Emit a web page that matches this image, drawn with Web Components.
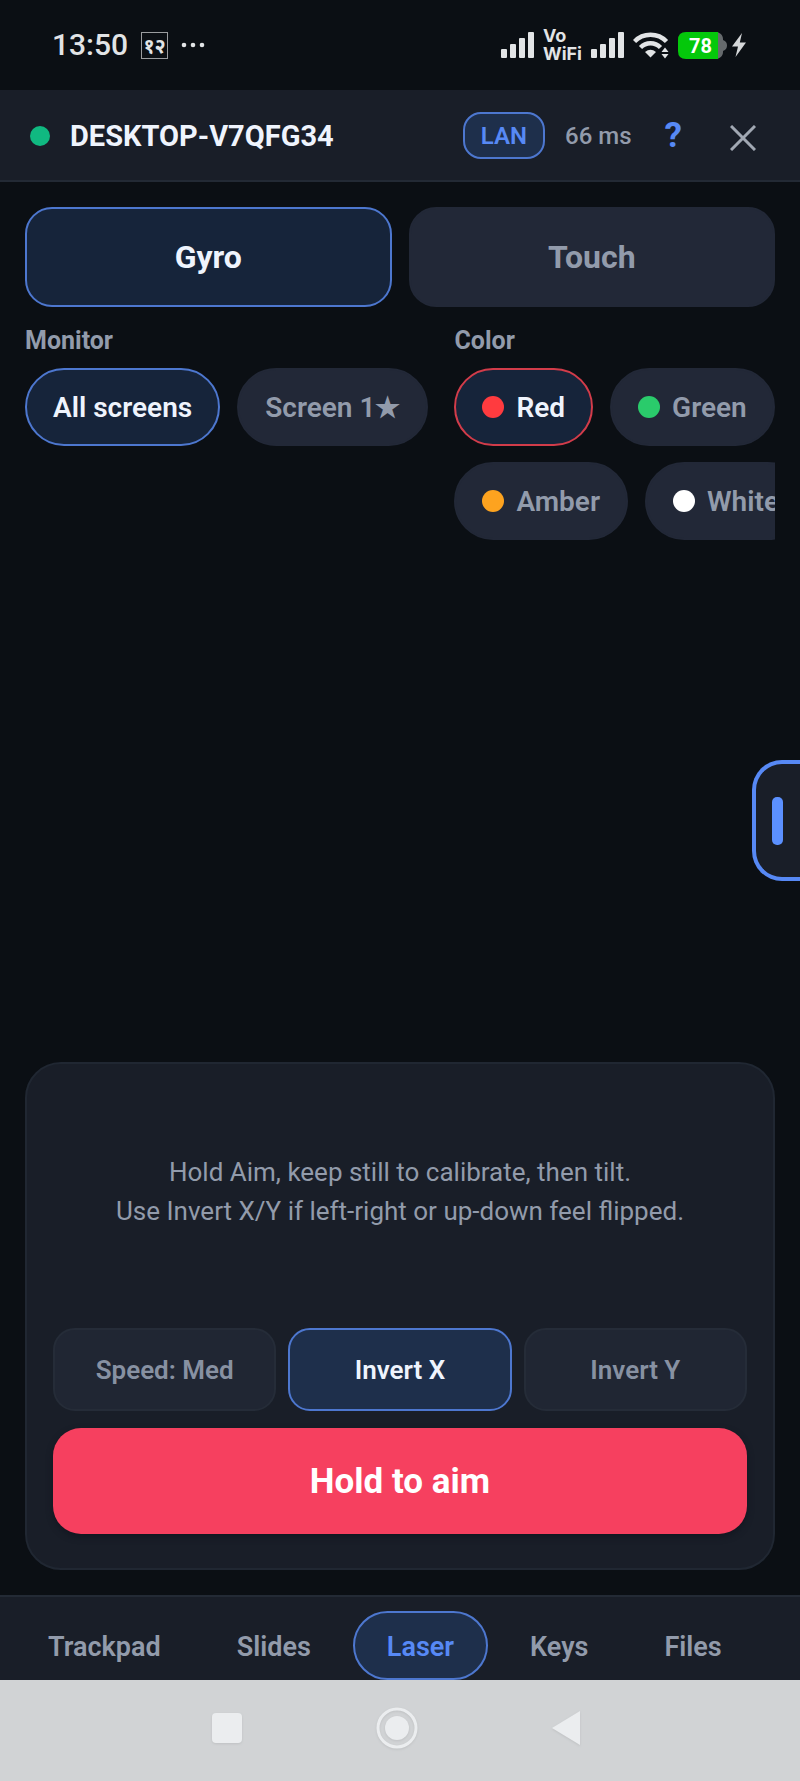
<!DOCTYPE html>
<html lang="en">
<head>
<meta charset="utf-8">
<meta name="viewport" content="width=device-width, initial-scale=1">
<title>Laser remote</title>
<style>
:root {
  --bg: #0b0f14;
  --surface: #191e28;
  --raised: #222837;
  --line: #232a35;
  --muted: #929bab;
  --text: #eff4fd;
  --accent: #5789f5;
  --accent-line: #4d77cf;
  --accent-fill: #16243a;
  --accent-soft: #1e2f4b;
}
body { margin: 0; background: var(--bg); color: var(--text); font-family: Roboto, "Noto Sans", sans-serif; }
</style>
</head>
<body>
<remote-app></remote-app>
<script>
const define = (name, html) => {
  const template = document.createElement('template');
  template.innerHTML = html;
  customElements.define(name, class extends HTMLElement {
    constructor() {
      super();
      this.attachShadow({ mode: 'open' }).append(template.content.cloneNode(true));
    }
  });
};

const buttonReset = 'button { font: inherit; color: inherit; margin: 0; padding: 0; border: 0; background: none; cursor: pointer; }';

define('signal-bars', `
<style>:host { display: block; } svg { display: block; }</style>
<svg width="33" height="26" viewBox="0 0 33 26" fill="#e2e4e6" aria-hidden="true">
  <rect y="17" width="6" height="9" rx="1"/><rect x="9" y="12" width="6" height="14" rx="1"/>
  <rect x="18" y="6" width="6" height="20" rx="1"/><rect x="27" width="6" height="26" rx="1"/>
</svg>`);

define('status-bar', `
<style>
:host { display: flex; align-items: center; justify-content: space-between; height: 90px; padding: 0 54px 0 52px; box-sizing: border-box; color: #e2e4e6; }
div { display: flex; align-items: center; }
svg { display: block; }
.left { gap: 13px; }
time { font-size: 30px; line-height: 36px; font-weight: 500; }
.app { box-sizing: border-box; width: 27px; height: 27px; border: 1px solid #9a9c9f; font-size: 20px; line-height: 26px; font-weight: 700; text-align: center; display: block; }
.right { gap: 9px; }
.vowifi { display: block; font-family: Inter, sans-serif; font-size: 18px; line-height: 18px; font-weight: 700; }
.vowifi span { display: block; }
.power { gap: 5px; }
.battery { position: relative; }
.battery span { position: absolute; left: 0; top: 0; width: 45px; line-height: 28px; text-align: center; color: #fff; font-size: 20px; font-weight: 700; }
</style>
<div class="left">
  <time>13:50</time>
  <span class="app">१२</span>
  <svg width="24" height="6" viewBox="0 0 24 6" fill="#e2e4e6" aria-hidden="true"><circle cx="3" cy="3" r="2.3"/><circle cx="12" cy="3" r="2.3"/><circle cx="21" cy="3" r="2.3"/></svg>
</div>
<div class="right">
  <signal-bars></signal-bars>
  <div class="vowifi"><span>Vo</span><span>WiFi</span></div>
  <signal-bars></signal-bars>
  <svg width="36" height="27" viewBox="0 0 36 27" fill="none" stroke="#e2e4e6" stroke-width="4.4" aria-hidden="true">
    <path d="M1.500 9.500C10 .5 25 .5 33.500 9.500"/><path d="M7.500 15.500C13 9.800 22 9.800 27.500 15.500"/>
    <path d="M12 20Q17.500 15.500 23 20L17.500 25.500Z" fill="#e2e4e6" stroke="none"/>
    <path d="M28.500 20L32 15.500L35.500 20ZM28.500 22L32 26.500L35.500 22Z" fill="#e2e4e6" stroke="none"/>
  </svg>
  <div class="power">
    <div class="battery">
      <svg width="49" height="27" viewBox="0 0 49 27" aria-hidden="true">
        <path d="M36 0h1c5 0 8 3 8 7v1c3 1 4 3 4 5.500s-1 4.500-4 5.500v1c0 4-3 7-8 7h-1z" fill="#666a6d"/>
        <path d="M8 0H40V27H8Q0 27 0 19V8Q0 0 8 0Z" fill="#04c80b"/>
      </svg>
      <span>78</span>
    </div>
    <svg width="14" height="24" viewBox="0 0 14 24" aria-hidden="true"><path d="M10 0L0 13.500H6L3.500 24L14 9.500H7.800Z" fill="#d5d7d9"/></svg>
  </div>
</div>`);

define('connection-header', `
<style>
${buttonReset}
:host { display: flex; align-items: center; height: 92px; padding: 1px 30px 0; box-sizing: border-box; background: var(--surface); border-bottom: 2px solid var(--line); }
.dot { width: 20px; height: 20px; border-radius: 50%; background: #10b981; }
h1 { flex: 1; margin: 0 0 0 20px; font-size: 29px; line-height: 36px; font-weight: 700; }
.badge { box-sizing: border-box; height: 47px; padding: 0 16px; border: 2px solid var(--accent-line); border-radius: 18px; background: var(--accent-soft); color: var(--accent); font-size: 24px; line-height: 44px; font-weight: 600; }
.ping { margin: 0 33px 0 20px; color: var(--muted); font-size: 24px; line-height: 30px; font-weight: 500; }
.help { color: var(--accent); font-size: 35px; line-height: 40px; font-weight: 700; }
.close { margin-left: 48px; padding: 4px 14px 0 0; }
svg { display: block; }
</style>
<span class="dot"></span>
<h1>DESKTOP-V7QFG34</h1>
<span class="badge">LAN</span>
<span class="ping">66 ms</span>
<button class="help" aria-label="Help">?</button>
<button class="close" aria-label="Close"><svg width="26" height="26" viewBox="0 0 26 26" fill="none" stroke="#a1a8b3" stroke-width="3"><path d="M1 1L25 25M25 1L1 25"/></svg></button>`);

define('mode-button', `
<style>
${buttonReset}
:host { display: block; flex: 1; }
button { box-sizing: border-box; width: 100%; height: 100px; border: 2px solid var(--raised); border-radius: 27px; background: var(--raised); color: var(--muted); font-size: 32px; font-weight: 700; }
:host([active]) button { border-color: var(--accent-line); background: var(--accent-fill); color: var(--text); }
</style>
<button><slot></slot></button>`);

define('choice-chip', `
<style>
${buttonReset}
:host { display: block; flex: none; }
button { box-sizing: border-box; display: flex; align-items: center; gap: 12px; height: 78px; padding: 0 26px; border: 2px solid var(--raised); border-radius: 39px; background: var(--raised); color: var(--muted); font-size: 28px; font-weight: 600; white-space: nowrap; }
:host([active]) button { border-color: var(--ring, var(--accent-line)); background: var(--accent-fill); color: var(--text); }
</style>
<button><slot name="dot"></slot><span><slot></slot></span></button>`);

define('color-dot', `
<style>:host { display: block; width: 22px; height: 22px; border-radius: 50%; background: var(--dot); }</style>`);

define('option-group', `
<style>
:host { display: block; min-width: 0; }
h2 { margin: 0 0 12px; color: var(--muted); font-size: 25px; line-height: 30px; font-weight: 700; }
.rows { display: grid; gap: 16px; overflow: hidden; }
</style>
<h2><slot name="label"></slot></h2>
<div class="rows"><slot></slot></div>`);

define('chip-row', `<style>:host { display: flex; gap: 17px; min-width: 0; }</style><slot></slot>`);

define('toggle-button', `
<style>
${buttonReset}
:host { display: block; flex: 1; }
button { box-sizing: border-box; width: 100%; height: 83px; border: 2px solid #252c38; border-radius: 22px; background: #202633; color: #8791a2; font-size: 26px; font-weight: 600; }
:host([active]) button { border-color: var(--accent-line); background: var(--accent-soft); color: var(--text); }
</style>
<button><slot></slot></button>`);

define('aim-panel', `
<style>
${buttonReset}
:host { display: block; padding: 89px 26px 34px; border: 2px solid #202732; border-radius: 36px; background: var(--surface); }
p { margin: 0 0 97px; color: var(--muted); text-align: center; font-size: 26px; line-height: 39px; }
.toggles { display: flex; gap: 12px; margin-bottom: 17px; }
.aim { display: block; width: 100%; height: 106px; border-radius: 28px; background: #f6405f; color: #fff; font-size: 35px; font-weight: 700; box-shadow: 0 3px 6px #131720; }
</style>
<p>Hold Aim, keep still to calibrate, then tilt.<br>Use Invert X/Y if left-right or up-down feel flipped.</p>
<div class="toggles">
  <toggle-button>Speed: Med</toggle-button>
  <toggle-button active>Invert X</toggle-button>
  <toggle-button>Invert Y</toggle-button>
</div>
<button class="aim">Hold to aim</button>`);

define('drawer-handle', `
<style>
${buttonReset}
:host { display: block; }
button { box-sizing: border-box; display: block; width: 48px; height: 121px; padding-left: 16px; border: 4px solid var(--accent); border-right: 0; border-radius: 30px 0 0 30px; background: var(--surface); }
span { display: block; width: 11px; height: 48px; border-radius: 5px; background: #5b90ff; }
</style>
<button aria-label="Open drawer"><span></span></button>`);

define('nav-tab', `
<style>
:host { display: block; }
a { box-sizing: border-box; display: block; height: 69px; padding: 0 32px; border: 2px solid transparent; border-radius: 35px; color: var(--muted); font-size: 27px; line-height: 68px; font-weight: 600; text-decoration: none; }
:host([active]) a { border-color: var(--accent-line); background: var(--accent-soft); color: var(--accent); }
</style>
<a href="#"><slot></slot></a>`);

define('tab-bar', `
<style>
:host { display: block; background: var(--surface); border-top: 2px solid var(--line); padding: 14px 14px 0; }
nav { display: flex; gap: 8px; }
</style>
<nav><nav-tab>Trackpad</nav-tab><nav-tab>Slides</nav-tab><nav-tab active>Laser</nav-tab><nav-tab>Keys</nav-tab><nav-tab>Files</nav-tab></nav>`);

define('system-nav', `
<style>
${buttonReset}
:host { display: flex; align-items: center; justify-content: center; gap: 134px; height: 101px; box-sizing: border-box; padding: 0 8px 6px 0; background: #d1d3d5; }
svg { display: block; filter: drop-shadow(0 1px 1px #bfc1c3); }
</style>
<button aria-label="Recents"><svg width="30" height="30" viewBox="0 0 30 30"><rect width="30" height="30" rx="4" fill="#ebedef"/></svg></button>
<button aria-label="Home"><svg width="42" height="42" viewBox="0 0 42 42"><circle cx="21" cy="21" r="19" fill="none" stroke="#ebedef" stroke-width="3"/><circle cx="21" cy="21" r="12" fill="#ebedef"/></svg></button>
<button aria-label="Back"><svg width="28" height="34" viewBox="0 0 28 34"><path d="M0 17L28 0V34Z" fill="#ebedef"/></svg></button>`);

define('remote-app', `
<style>
:host { display: flex; flex-direction: column; min-height: 100vh; }
main { position: relative; flex: 1; display: flex; flex-direction: column; padding: 25px 25px; overflow: hidden; }
.modes { display: flex; gap: 17px; }
.options { display: flex; gap: 26px; margin-top: 19px; }
.options option-group:last-child { flex: 1; }
aim-panel { margin-top: auto; }
drawer-handle { position: absolute; right: 0; top: 578px; }
</style>
<status-bar></status-bar>
<connection-header></connection-header>
<main>
  <div class="modes"><mode-button active>Gyro</mode-button><mode-button>Touch</mode-button></div>
  <div class="options">
    <option-group>
      <span slot="label">Monitor</span>
      <chip-row><choice-chip active>All screens</choice-chip><choice-chip>Screen 1★</choice-chip></chip-row>
    </option-group>
    <option-group>
      <span slot="label">Color</span>
      <chip-row>
        <choice-chip active style="--ring: #d23c4a"><color-dot slot="dot" style="--dot: #ff3b3f"></color-dot>Red</choice-chip>
        <choice-chip><color-dot slot="dot" style="--dot: #2acb6b"></color-dot>Green</choice-chip>
      </chip-row>
      <chip-row>
        <choice-chip><color-dot slot="dot" style="--dot: #fda31f"></color-dot>Amber</choice-chip>
        <choice-chip><color-dot slot="dot" style="--dot: #ffffff"></color-dot>White</choice-chip>
      </chip-row>
    </option-group>
  </div>
  <drawer-handle></drawer-handle>
  <aim-panel></aim-panel>
</main>
<tab-bar></tab-bar>
<system-nav></system-nav>`);
</script>
</body>
</html>
